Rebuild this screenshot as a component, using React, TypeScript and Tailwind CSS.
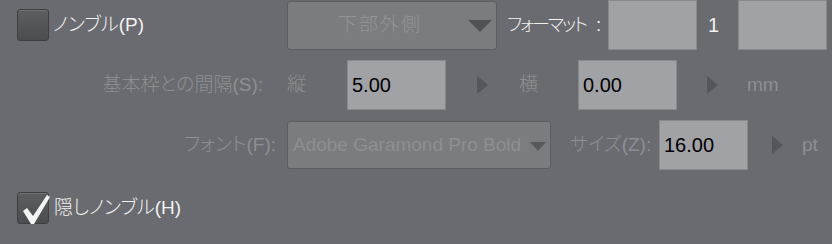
const font = { fontFamily: '"Liberation Sans", Arial, "Noto Sans CJK JP", sans-serif', fontFeatureSettings: '"palt"' };

const Checkbox = ({ checked }: { checked?: boolean }) => (
  <div className="relative flex-none w-[32px] h-[32px] rounded-[3px] border border-[#3e3f43] bg-gradient-to-b from-[#5d5e62] to-[#4c4d51] shadow-[inset_0_1px_0_rgba(255,255,255,0.12)]">
    {checked && (
      <svg viewBox="0 0 32 32" className="absolute left-[1px] top-[-1px] w-[32px] h-[34px]">
        <path d="M4 18 L8 15 L14 23 L28 2 L31 4 L15 31 L12 31 Z" fill="#f4f4f4" />
      </svg>
    )}
  </div>
);

const Triangle = () => (
  <svg viewBox="0 0 11 18" className="w-[11px] h-[18px]">
    <path d="M0 0 L11 9 L0 18 Z" fill="#55565a" />
  </svg>
);

const NumInput = ({ value, w }: { value: string; w: string }) => (
  <div className={`${w} flex-none h-[50px] bg-[#a0a2a6] border border-[#88898d] flex items-center pl-[4px] text-[20px] text-black`}>
    {value}
  </div>
);

const App = () => {
  return (
    <div className="w-[832px] h-[244px] bg-[#6a6b70] text-[19px] font-light whitespace-nowrap overflow-hidden" style={font}>
      {/* row 1 */}
      <div className="flex items-center h-[50px]">
        <div className="w-[287px] flex-none flex items-center pl-[17px] gap-[4px]">
          <Checkbox />
          <span className="text-[#f2f2f2]">ノンブル(P)</span>
        </div>
        <div className="w-[210px] flex-none h-[49px] mt-[1px] rounded-[3px] bg-[#7b7c80] border border-[#5c5d61] flex items-center relative">
          <span className="text-[#939498] ml-[50px] tracking-[2px]">下部外側</span>
          <svg viewBox="0 0 24 12" className="absolute left-[180px] top-[18px] w-[24px] h-[12px]">
            <path d="M0 0 L24 0 L12 12 Z" fill="#505155" />
          </svg>
        </div>
        <div className="ml-[10px] w-[101px] flex-none flex items-center text-[#f2f2f2]">
          <span className="text-[18px] tracking-[-2px]">フォーマット</span>
          <span className="ml-[10px]">:</span>
        </div>
        <div className="w-[89px] flex-none h-[50px] bg-[#a0a2a6] border border-[#88898d]" />
        <span className="w-[41px] flex-none pl-[11px] text-[#f2f2f2] text-[20px]">1</span>
        <div className="w-[89px] flex-none h-[50px] bg-[#a0a2a6] border border-[#88898d]" />
      </div>

      {/* row 2 */}
      <div className="flex items-center h-[50px] mt-[10px] text-[#8e8f93]">
        <div className="w-[287px] flex-none text-right pr-[24px]">基本枠との間隔(S):</div>
        <span className="w-[60px] flex-none">縦</span>
        <NumInput value="5.00" w="w-[99px]" />
        <div className="w-[73px] flex-none pl-[31px] flex items-center"><Triangle /></div>
        <span className="w-[59px] flex-none">横</span>
        <NumInput value="0.00" w="w-[99px]" />
        <div className="w-[70px] flex-none pl-[30px] flex items-center"><Triangle /></div>
        <span>mm</span>
      </div>

      {/* row 3 */}
      <div className="flex items-center h-[50px] mt-[10px] text-[#8e8f93]">
        <div className="w-[287px] flex-none text-right pr-[11px]">フォント(F):</div>
        <div className="w-[264px] flex-none h-[48px] rounded-[3px] bg-[#7b7c80] border border-[#5c5d61] flex items-center pl-[5px] relative">
          <span>Adobe Garamond Pro Bold</span>
          <svg viewBox="0 0 16 9" className="absolute left-[242px] top-[20px] w-[16px] h-[9px]">
            <path d="M0 0 L16 0 L8 9 Z" fill="#58595d" />
          </svg>
        </div>
        <span className="ml-[19px] w-[89px] flex-none">サイズ(Z):</span>
        <NumInput value="16.00" w="w-[89px]" />
        <div className="w-[54px] flex-none pl-[24px] flex items-center"><Triangle /></div>
        <span>pt</span>
      </div>

      {/* row 4 */}
      <div className="flex items-center h-[34px] mt-[21px] pl-[17px] gap-[5px]">
        <Checkbox checked />
        <span className="text-[#f2f2f2]">隠しノンブル(H)</span>
      </div>
    </div>
  );
};

export default App;
